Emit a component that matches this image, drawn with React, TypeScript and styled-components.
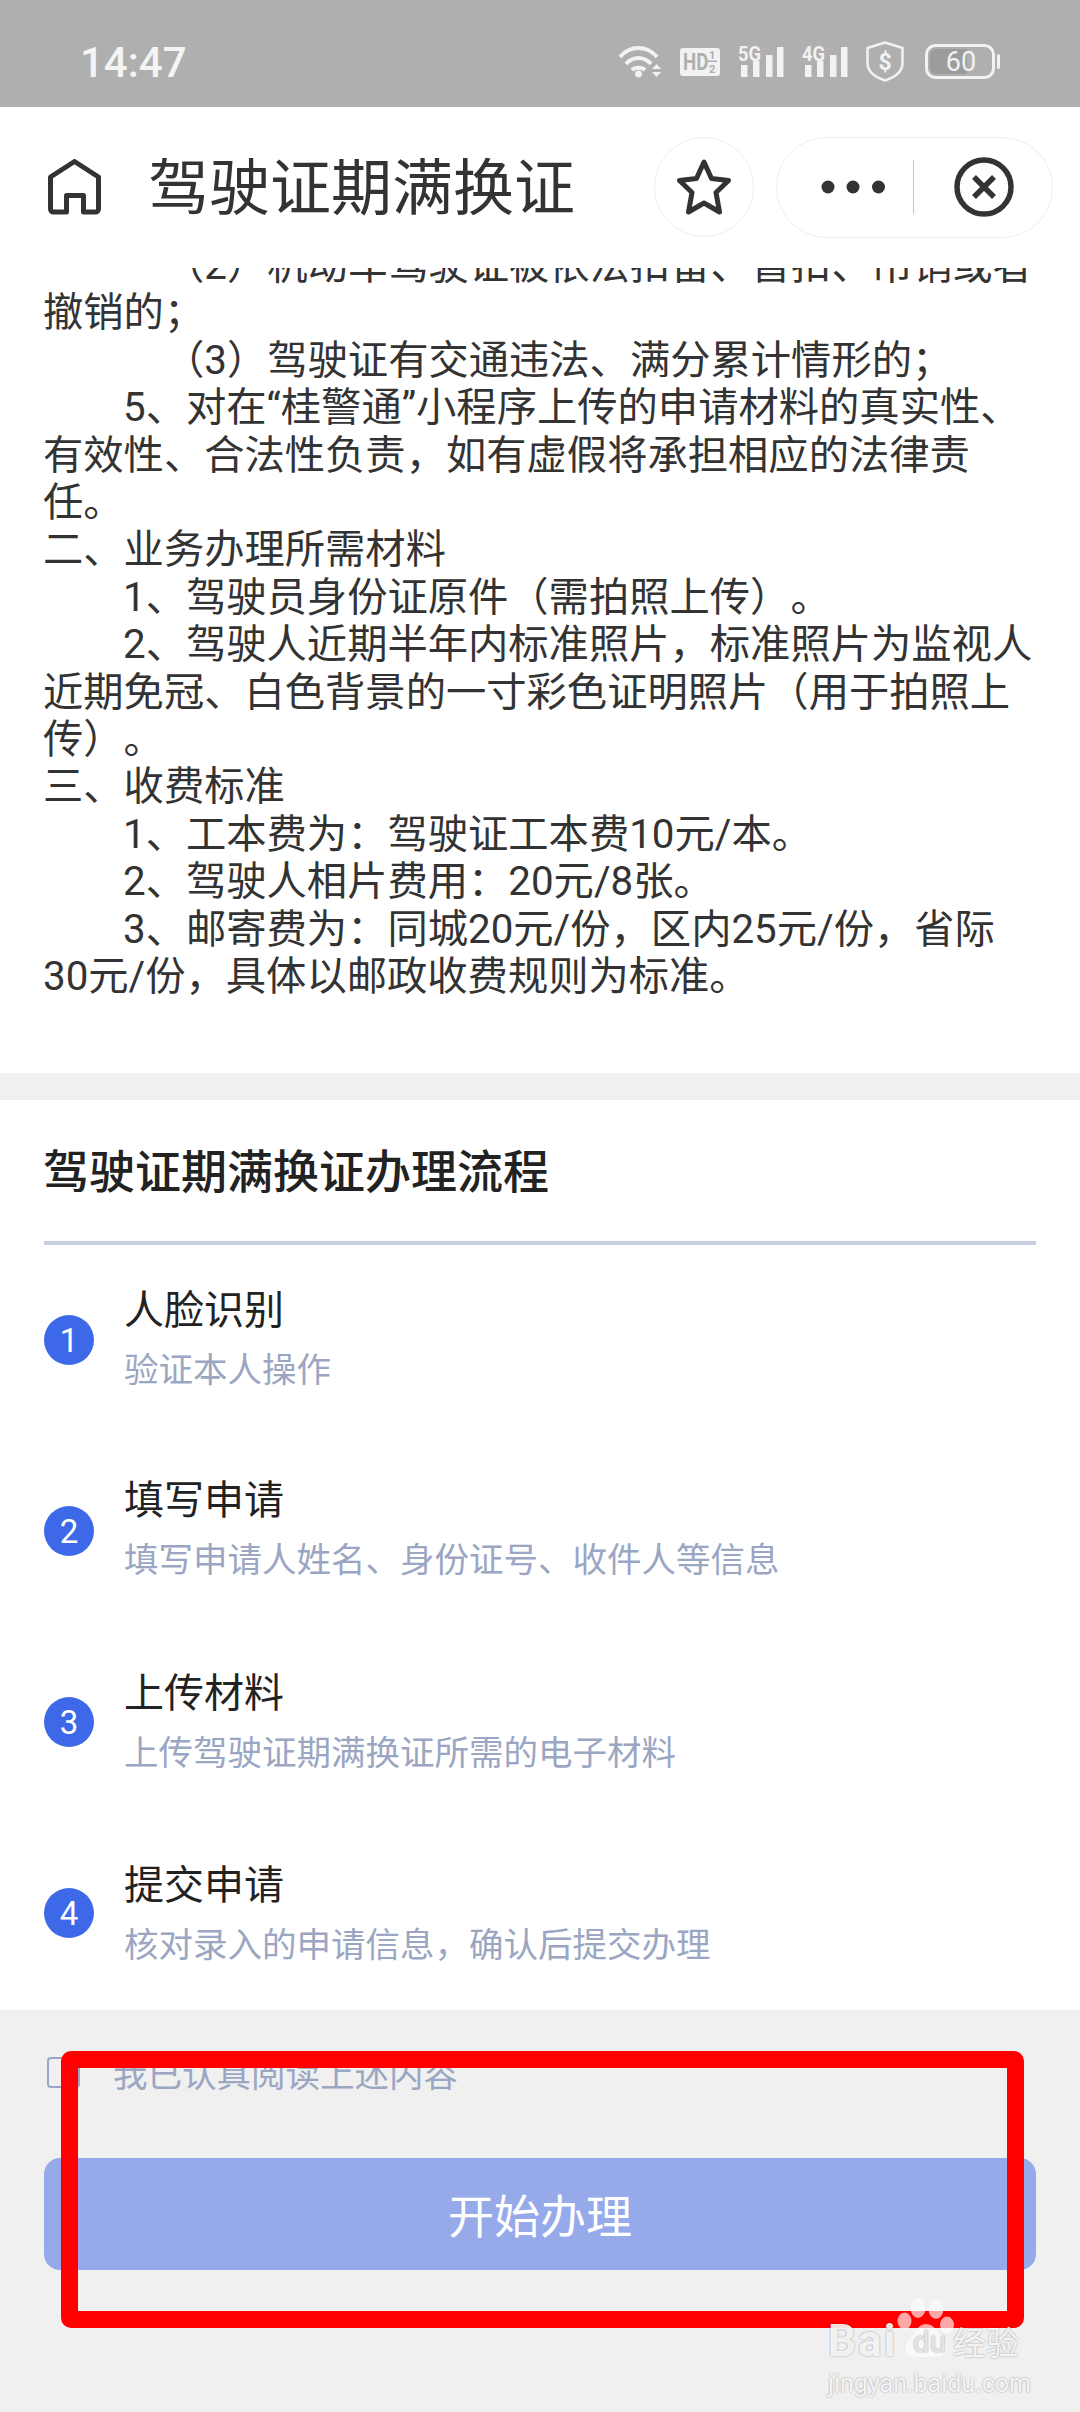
import styled, { createGlobalStyle } from 'styled-components'

const GlobalStyle = createGlobalStyle`
  html, body {
    margin: 0;
    padding: 0;
    background: #ffffff;
  }
  * {
    box-sizing: border-box;
  }
`

const rules = [
  { indent: 121, text: '（2）机动车驾驶证被依法扣留、暂扣、吊销或者撤销的；' },
  { indent: 121, text: '（3）驾驶证有交通违法、满分累计情形的；' },
  { indent: 80, text: '5、对在“桂警通”小程序上传的申请材料的真实性、有效性、合法性负责，如有虚假将承担相应的法律责任。' },
  { indent: 0, text: '二、业务办理所需材料' },
  { indent: 80, text: '1、驾驶员身份证原件（需拍照上传）。' },
  { indent: 80, text: '2、驾驶人近期半年内标准照片，标准照片为监视人近期免冠、白色背景的一寸彩色证明照片（用于拍照上传）。' },
  { indent: 0, text: '三、收费标准' },
  { indent: 80, text: '1、工本费为：驾驶证工本费10元/本。' },
  { indent: 80, text: '2、驾驶人相片费用：20元/8张。' },
  { indent: 80, text: '3、邮寄费为：同城20元/份，区内25元/份，省际30元/份，具体以邮政收费规则为标准。' },
]

const steps = [
  { title: '人脸识别', desc: '验证本人操作', shift: 1 },
  { title: '填写申请', desc: '填写申请人姓名、身份证号、收件人等信息', shift: 0 },
  { title: '上传材料', desc: '上传驾驶证期满换证所需的电子材料', shift: 2 },
  { title: '提交申请', desc: '核对录入的申请信息，确认后提交办理', shift: 3 },
]

const signalBars = [
  { x: 3, y: 20, h: 12 },
  { x: 15, y: 16, h: 16 },
  { x: 28, y: 10, h: 22 },
  { x: 39, y: 2, h: 30 },
]

function Signal({ label }: { label: string }) {
  return (
    <StatusSvg width="46" height="33" viewBox="0 0 46 33">
      <text x="0" y="16" fontSize="21" fontWeight="700" fontFamily="Roboto" fill="#f2f2f2" textLength="23" lengthAdjust="spacingAndGlyphs">
        {label}
      </text>
      {signalBars.map((b) => (
        <rect key={b.x} x={b.x} y={b.y} width="6.5" height={b.h} fill="#f2f2f2" />
      ))}
    </StatusSvg>
  )
}

function App() {
  return (
    <Page lang="zh-CN">
      <GlobalStyle />
      <StatusBar>
        <Clock>14:47</Clock>
        <StatusIcons>
          <svg width="44" height="33" viewBox="0 0 44 33" fill="none" stroke="#f2f2f2" strokeWidth="4">
            <path d="M2 12C12 0 29 0 39 12" />
            <path d="M8 19C15 11 26 11 33 19" />
            <path d="M14 25C17 22 24 22 27 25" />
            <circle cx="20.5" cy="29" r="3.5" fill="#f2f2f2" stroke="none" />
            <path d="M34 24L38.5 19L43 24Z M34 27L38.5 32L43 27Z" fill="#f2f2f2" stroke="none" />
          </svg>
          <StatusSvg width="40" height="28" viewBox="0 0 40 28">
            <rect width="40" height="28" rx="3" fill="#f2f2f2" />
            <text x="4" y="22.5" fontSize="24" fontWeight="700" fontFamily="Roboto" fill="#afafaf" transform="scale(0.78 1)">
              HD
            </text>
            <text x="29" y="11" fontSize="11" fontWeight="700" fontFamily="Roboto" fill="#afafaf">1</text>
            <rect x="27" y="12.5" width="10" height="1.5" fill="#afafaf" />
            <text x="29" y="25" fontSize="11" fontWeight="700" fontFamily="Roboto" fill="#afafaf">2</text>
          </StatusSvg>
          <Signal label="5G" />
          <Signal label="4G" />
          <svg width="38" height="41" viewBox="0 0 38 41" fill="none">
            <path d="M19 1.5L36.5 7V22C36.5 31 28 36.5 19 39.5C10 36.5 1.5 31 1.5 22V7Z" stroke="#f2f2f2" strokeWidth="2.5" />
            <text x="19" y="29" fontSize="23" fontWeight="700" fontFamily="Roboto" fill="#f2f2f2" textAnchor="middle">$</text>
          </svg>
          <BatteryIcon width="75" height="35" viewBox="0 0 75 35" fill="none">
            <rect x="1.5" y="1.5" width="67" height="32" rx="9" stroke="#f2f2f2" strokeWidth="3" />
            <path d="M5 11a6 6 0 0 1 6-6H42V30H11a6 6 0 0 1-6-6Z" fill="#9c9c9c" />
            <text x="36" y="27" fontSize="27" fontFamily="Roboto" fill="#f2f2f2" textAnchor="middle">60</text>
            <rect x="72" y="10" width="3" height="15" rx="1.5" fill="#f2f2f2" />
          </BatteryIcon>
        </StatusIcons>
      </StatusBar>

      <NavBar>
        <svg width="53" height="56" viewBox="0 0 53 56" fill="none" stroke="#333" strokeWidth="5" strokeLinejoin="round">
          <path d="M2.5 18L26.5 2.5L50.5 18V50a3 3 0 0 1-3 3H35.5V36.5H18.5V53H5.5a3 3 0 0 1-3-3Z" />
        </svg>
        <NavTitle>驾驶证期满换证</NavTitle>
        <StarButton>
          <svg width="54" height="57" viewBox="0 0 54 57" fill="none" stroke="#333" strokeWidth="5" strokeLinejoin="round">
            <path d="M27 3L34.5 19.5L51.5 21.5L39 33.5L42.5 53L27 44L11.5 53L15 33.5L2.5 21.5L19.5 19.5Z" />
          </svg>
        </StarButton>
        <Capsule>
          <svg width="64" height="14" viewBox="0 0 64 14" fill="#333">
            <circle cx="7" cy="7" r="6.5" />
            <circle cx="32" cy="7" r="6.5" />
            <circle cx="57.5" cy="7" r="6.5" />
          </svg>
          <CapsuleDivider />
          <svg width="60" height="60" viewBox="0 0 60 60" fill="none" stroke="#333" strokeWidth="5.5">
            <circle cx="30" cy="30" r="27" />
            <path d="M20 20L40 40M40 20L20 40" />
          </svg>
        </Capsule>
      </NavBar>

      <Content>
        <Rules>
          {rules.map((r) => (
            <RuleLine key={r.text} $indent={r.indent}>
              {r.text}
            </RuleLine>
          ))}
        </Rules>
        <Band />
        <Flow>
          <FlowTitle>驾驶证期满换证办理流程</FlowTitle>
          <FlowDivider />
          {steps.map((s, i) => (
            <Step key={s.title}>
              <StepNumber>{i + 1}</StepNumber>
              <StepBody $shift={s.shift}>
                <StepTitle>{s.title}</StepTitle>
                <StepDesc>{s.desc}</StepDesc>
              </StepBody>
            </Step>
          ))}
        </Flow>
      </Content>

      <Footer>
        <AgreeRow>
          <CheckBox />
          <AgreeLabel>我已认真阅读上述内容</AgreeLabel>
        </AgreeRow>
        <StartButton>开始办理</StartButton>
        <RedFrame />
        <Watermark>
          <PawIcon width="60" height="62" viewBox="0 0 60 62" fill="#ffffff">
            <ellipse cx="21" cy="11" rx="7.5" ry="10" />
            <ellipse cx="39" cy="12" rx="7.5" ry="10" />
            <ellipse cx="7.5" cy="24" rx="7" ry="8.5" />
            <ellipse cx="50" cy="28" rx="7" ry="8.5" />
            <path d="M29 27C38 27 40 36 47 42C54 50 48 60 39 60H18C9 60 5 50 12 43C19 37 20 27 29 27Z" />
          </PawIcon>
          <BrandRow>
            <BrandLatin>Bai</BrandLatin>
            <BrandDu>du</BrandDu>
            <BrandCn>经验</BrandCn>
          </BrandRow>
          <BrandUrl>jingyan.baidu.com</BrandUrl>
        </Watermark>
      </Footer>
    </Page>
  )
}

export default App

const Page = styled.div`
  width: 1080px;
  height: 2412px;
  display: flex;
  flex-direction: column;
  overflow: hidden;
  position: relative;
  font-family: Roboto, "Noto Sans CJK SC", sans-serif;
  text-spacing-trim: space-all;
  background: #ffffff;
`

const StatusBar = styled.div`
  height: 107px;
  flex: none;
  display: flex;
  align-items: center;
  justify-content: space-between;
  padding: 16px 80px 0;
  background: #afafaf;
`

const Clock = styled.span`
  margin-top: 2px;
  font-size: 42px;
  font-weight: 500;
  color: #f4f4f4;
`

const StatusIcons = styled.div`
  display: flex;
  align-items: center;
  gap: 18px;
`

const StatusSvg = styled.svg`
  overflow: visible;
`

const BatteryIcon = styled.svg`
  margin-left: 3px;
`

const NavBar = styled.div`
  height: 161px;
  flex: none;
  display: flex;
  align-items: center;
  padding: 0 27px 1px 48px;
  background: #ffffff;
`

const NavTitle = styled.div`
  flex: 1;
  margin: 3px 0 0 47px;
  font-size: 61px;
  line-height: 70px;
  color: #333333;
`

const StarButton = styled.div`
  width: 100px;
  height: 100px;
  display: flex;
  align-items: center;
  justify-content: center;
  margin-right: 22px;
  border: 1.5px solid #eeeeee;
  border-radius: 50%;
`

const Capsule = styled.div`
  width: 277px;
  height: 101px;
  display: flex;
  align-items: center;
  padding-left: 43.5px;
  border: 1.5px solid #eeeeee;
  border-radius: 51px;
`

const CapsuleDivider = styled.div`
  width: 1.5px;
  height: 54px;
  margin: 0 40px 0 28px;
  background: #c6c6c6;
`

const Content = styled.div`
  flex: 1;
  min-height: 0;
  overflow: hidden;
`

const Rules = styled.div`
  margin-top: -26px;
  padding: 0 44px 72px 43px;
  font-size: 40.3px;
  line-height: 47.4px;
  color: #333333;
`

const RuleLine = styled.div<{ $indent: number }>`
  text-indent: ${(p) => p.$indent}px;
`

const Band = styled.div`
  height: 27px;
  background: #f0f0f0;
`

const Flow = styled.section`
  padding: 42px 44px 0;
`

const FlowTitle = styled.div`
  margin-left: -1px;
  font-size: 46px;
  line-height: 60px;
  font-weight: 500;
  color: #222222;
`

const FlowDivider = styled.div`
  height: 4px;
  margin-top: 39px;
  background: #c8cfde;
`

const Step = styled.div`
  height: 191px;
  display: flex;
  align-items: center;
  gap: 30px;
`

const StepNumber = styled.div`
  width: 50px;
  height: 50px;
  flex: none;
  display: flex;
  align-items: center;
  justify-content: center;
  border-radius: 50%;
  background: #3d69e8;
  color: #ffffff;
  font-size: 33px;
`

const StepBody = styled.div<{ $shift: number }>`
  padding-top: ${(p) => p.$shift * 2}px;
`

const StepTitle = styled.div`
  font-size: 40px;
  line-height: 58px;
  color: #222222;
`

const StepDesc = styled.div`
  font-size: 34.5px;
  line-height: 60px;
  color: #9aa6c2;
`

const Footer = styled.div`
  height: 402px;
  flex: none;
  position: relative;
  padding: 47px 44px 0;
  background: #f0f0f0;
`

const AgreeRow = styled.div`
  height: 31px;
  display: flex;
  align-items: center;
  gap: 33px;
  padding-left: 3px;
`

const CheckBox = styled.div`
  width: 33px;
  height: 31px;
  border: 2.5px solid #9aa5c8;
  border-radius: 4px;
`

const AgreeLabel = styled.span`
  margin-top: -2px;
  font-size: 34.5px;
  color: #9aa6c2;
`

const StartButton = styled.div`
  height: 112px;
  margin-top: 70px;
  padding-bottom: 2px;
  display: flex;
  align-items: center;
  justify-content: center;
  border-radius: 16px;
  background: #96aaea;
  color: #ffffff;
  font-size: 46px;
`

const RedFrame = styled.div`
  position: absolute;
  left: 61px;
  top: 41px;
  width: 963px;
  height: 277px;
  border: 17px solid #ff0000;
  border-radius: 10px;
`

const Watermark = styled.div`
  position: absolute;
  left: 828px;
  top: 287px;
  width: 195px;
  color: rgba(255, 255, 255, 0.9);
  text-shadow: 0 0 2px rgba(0, 0, 0, 0.4);
`

const PawIcon = styled.svg`
  position: absolute;
  left: 69px;
  top: 0;
  opacity: 0.65;
`

const BrandRow = styled.div`
  position: relative;
  display: flex;
  align-items: center;
  height: 40px;
  margin-top: 24px;
`

const BrandLatin = styled.span`
  width: 78px;
  font-size: 44px;
  font-weight: 700;
  letter-spacing: 2px;
`

const BrandDu = styled.span`
  width: 47px;
  font-size: 30px;
  text-align: center;
  color: #e6e6e6;
`

const BrandCn = styled.span`
  font-size: 33px;
  white-space: nowrap;
`

const BrandUrl = styled.div`
  margin-top: 8px;
  font-size: 25px;
  line-height: 30px;
  white-space: nowrap;
`
